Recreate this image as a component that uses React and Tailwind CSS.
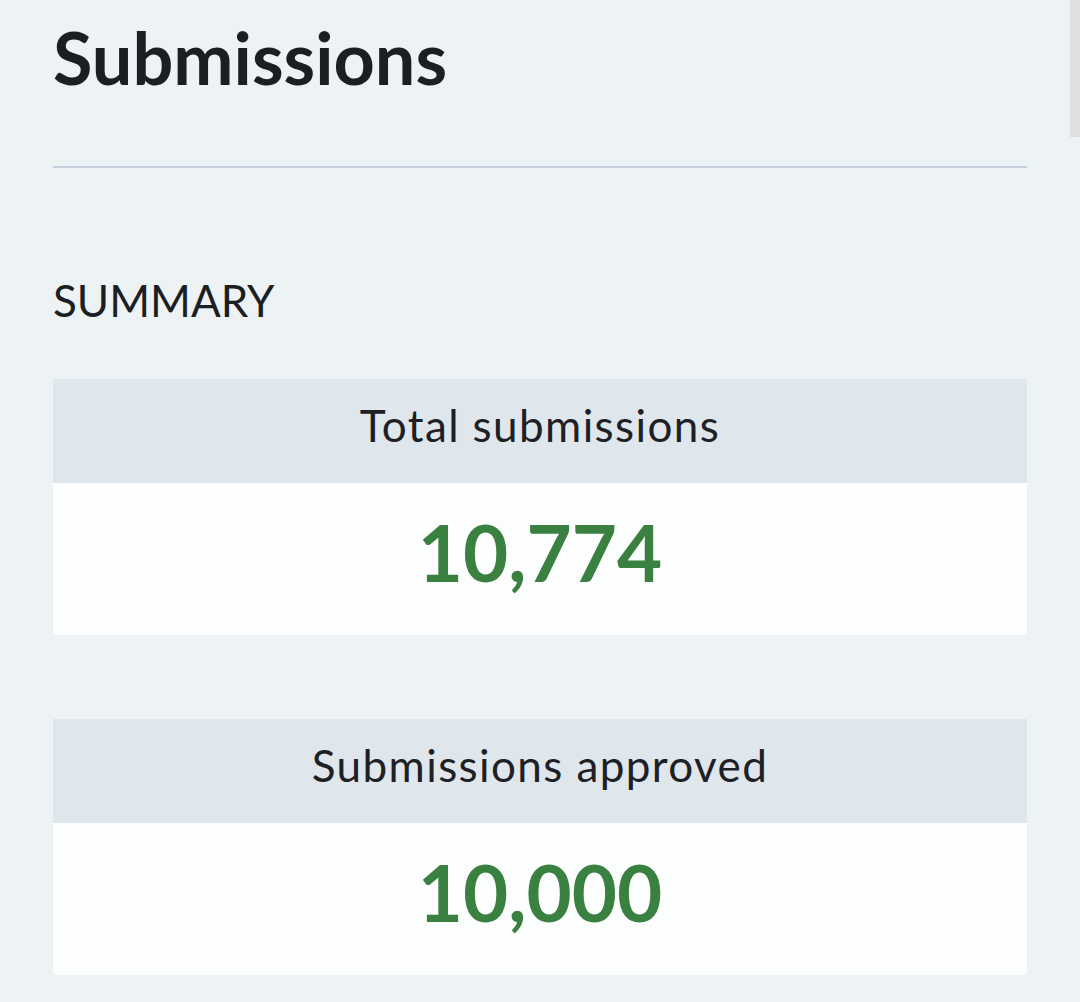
import React from 'react';

const stats = [
    { label: 'Total submissions', value: '10,774' },
    { label: 'Submissions approved', value: '10,000' },
];

const StatCard = ({ label, value }) => (
    <div className="flex flex-col">
        <div className="h-[104px] flex items-center justify-center bg-[#dfe6ec] pb-[12px]">
            <span className="text-[44px] leading-none tracking-[1.4px] text-[#1d2125]">{label}</span>
        </div>
        <div className="h-[152px] flex items-center justify-center bg-[#fcfdfd] pb-[15px]">
            <span className="text-[78px] leading-none font-bold text-[#3a8040]">{value}</span>
        </div>
    </div>
);

const App = () => {
    return (
        <div className="relative min-h-screen bg-[#edf2f5] font-['Lato',sans-serif]">
            {/* scrollbar thumb */}
            <div className="absolute top-0 right-0 w-[10px] h-[137px] bg-[#dedfe0]"></div>

            <div className="px-[53px] pt-[21px] pb-[26px]">
                <h1 className="text-[72px] leading-none font-bold text-[#1b1f23]">Submissions</h1>
                <div className="mt-[73px] h-[2px] bg-[#c5d0dc]"></div>

                <h2 className="mt-[110px] text-[44px] leading-none text-[#1b1f23]">SUMMARY</h2>

                <div className="mt-[57px] flex flex-col gap-[84px]">
                    {stats.map((s) => (
                        <StatCard key={s.label} label={s.label} value={s.value} />
                    ))}
                </div>
            </div>
        </div>
    );
};

export default App;
